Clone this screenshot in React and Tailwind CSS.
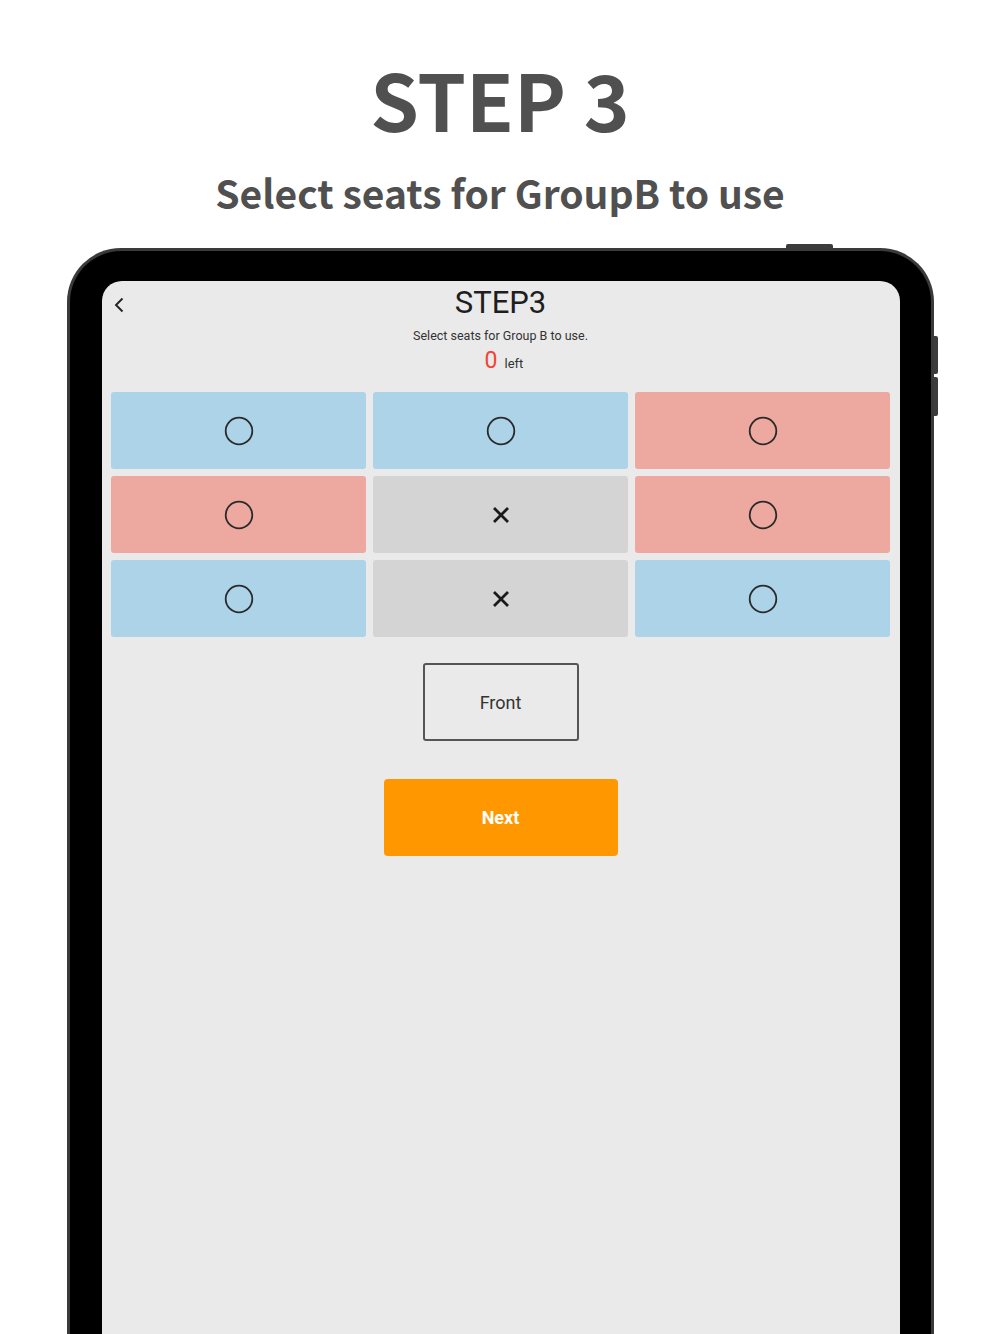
import React from "react";

const seats = ["b", "b", "p", "p", "x", "p", "b", "x", "b"];

function Seat({ t }) {
  const bg = t === "b" ? "bg-[#acd3e7]" : t === "p" ? "bg-[#eda9a0]" : "bg-[#d4d4d4]";
  return (
    <div className={`h-[77px] rounded-[3px] flex items-center justify-center ${bg}`}>
      {t === "x" ? (
        <svg width="18" height="18" viewBox="0 0 18 18">
          <path d="M2 2 L16 16 M16 2 L2 16" stroke="#1a1a1a" strokeWidth="2.8" strokeLinecap="butt" />
        </svg>
      ) : (
        <svg width="30" height="30" viewBox="0 0 30 30">
          <circle cx="15" cy="15" r="13.3" fill="none" stroke="#2a2a2a" strokeWidth="1.8" />
        </svg>
      )}
    </div>
  );
}

export default function App() {
  return (
    <div className="w-[1000px] h-[1334px] overflow-hidden bg-white flex flex-col items-center" style={{ fontFamily: "Roboto, 'Noto Sans', sans-serif" }}>
      <div className="text-center text-[#505050] font-bold" style={{ fontFamily: "'Noto Sans CJK JP', 'Noto Sans', sans-serif" }}>
        <div className="text-[78px] leading-[78px] mt-[59px]">STEP 3</div>
        <div className="text-[39px] leading-[44px] mt-[33px]">Select seats for GroupB to use</div>
      </div>
      <div className="relative mt-[34px] w-[867px] flex-1">
        <div className="absolute left-[719px] -top-[4px] w-[47px] h-[6px] rounded-t-[2px] bg-[#3c3c3c]"></div>
        <div className="absolute -right-[4px] top-[88px] w-[6px] h-[38px] rounded-r-[2px] bg-[#3c3c3c]"></div>
        <div className="absolute -right-[4px] top-[129px] w-[6px] h-[39px] rounded-r-[2px] bg-[#3c3c3c]"></div>
        <div className="relative h-full bg-black border-[3px] border-b-0 border-[#3a3a3a] rounded-t-[54px] pt-[30px] pl-[32px] pr-[31px]">
          <div className="h-full bg-[#eaeaea] rounded-t-[20px] flex flex-col items-center relative">
            <svg className="absolute left-[11px] top-[16px]" width="12" height="16" viewBox="0 0 12 16">
              <path d="M9.5 1.5 L3 8 L9.5 14.5" fill="none" stroke="#222" strokeWidth="1.9" />
            </svg>
            <div className="mt-[4px] text-[31px] leading-[36px] text-[#1e1e1e]">STEP3</div>
            <div className="mt-[7px] text-[12.5px] leading-[16px] text-[#333]">Select seats for Group B to use.</div>
            <div className="mt-[4px] ml-[7px] flex items-baseline h-[26px]">
              <span className="text-[23px] leading-[26px] text-[#f44336]">0</span>
              <span className="ml-[7px] text-[13px] leading-[26px] text-[#333]">left</span>
            </div>
            <div className="mt-[18px] w-[779px] grid grid-cols-3 gap-[7px]">
              {seats.map((s, i) => (
                <Seat key={i} t={s} />
              ))}
            </div>
            <div className="mt-[26px] w-[156px] h-[78px] border-2 border-[#555] rounded-[3px] flex items-center justify-center text-[18px] text-[#333]">
              Front
            </div>
            <div className="mt-[38px] w-[234px] h-[77px] bg-[#ff9800] rounded-[4px] flex items-center justify-center text-[18px] font-bold text-white">
              Next
            </div>
          </div>
        </div>
      </div>
    </div>
  );
}
